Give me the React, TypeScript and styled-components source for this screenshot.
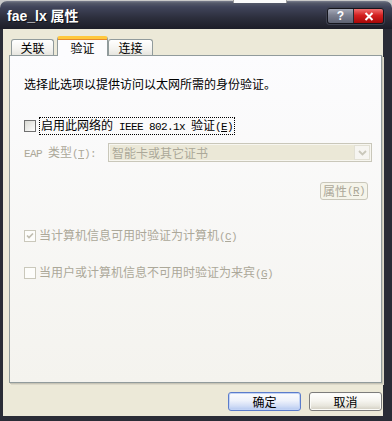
import styled, { createGlobalStyle } from "styled-components";

const GlobalStyle = createGlobalStyle`
  html, body { margin: 0; padding: 0; }
  body {
    width: 392px;
    height: 421px;
    overflow: hidden;
    background: #c9c9c9;
    font-family: "Noto Sans CJK SC", "Liberation Sans", sans-serif;
    font-size: 12px;
  }
  * { box-sizing: border-box; }
`;

const DISABLED = "#aca899";

const Window = styled.div`
  position: relative;
  width: 392px;
  height: 421px;
  display: flex;
  flex-direction: column;
`;

// 뒤쪽 창의 일부 (상단에 살짝 보이는 흰 영역)
const Peek = styled.div`
  position: absolute;
  top: 0;
  left: 233px;
  width: 54px;
  height: 3px;
  background: #fbfbfb;
  border-left: 1px solid #9a9a9a;
  border-right: 1px solid #9a9a9a;
  z-index: 2;
`;

const TitleBar = styled.div`
  height: 28px;
  margin-top: 1px;
  border-radius: 7px 7px 0 0;
  background: linear-gradient(
    #7a7e8e 0px,
    #555a6a 2px,
    #40445a 6px,
    #2c2e3c 17px,
    #1d1e28 28px
  );
  display: flex;
  align-items: center;
  justify-content: space-between;
  padding: 0 8px 0 7px;
`;

const Title = styled.div`
  color: #fff;
  font-family: "Liberation Sans", "Noto Sans CJK SC", sans-serif;
  font-weight: bold;
  font-size: 14px;
  line-height: 16px;
  padding-top: 2px;
  text-shadow: 1px 1px 0 #111218;
`;

const TitleButtons = styled.div`
  display: flex;
  margin-top: 2px;
  border: 1px solid #15161d;
  border-radius: 3px;
  overflow: hidden;
  box-shadow: 0 0 0 1px #3e4150;
`;

const CapButton = styled.div<{ $kind: "help" | "close" }>`
  width: ${(p) => (p.$kind === "help" ? 25 : 30)}px;
  height: 14px;
  display: flex;
  align-items: center;
  justify-content: center;
  color: #fff;
  font-family: "Liberation Sans", sans-serif;
  font-weight: bold;
  font-size: 12px;
  background: ${(p) =>
    p.$kind === "help"
      ? "linear-gradient(#a4a8b6, #7c8090 45%, #5e6272)"
      : "linear-gradient(#f07070, #d42020 45%, #a80808)"};
  border-left: ${(p) => (p.$kind === "close" ? "1px solid #2a2b34" : "none")};
`;

const Frame = styled.div`
  flex: 1;
  display: flex;
  flex-direction: column;
  background: #ece9d8;
  border-left: 3px solid #2a2c36;
  border-right: 9px solid #2a2c36;
  border-bottom: 5px solid #2a2c36;
  padding: 7px 1px 0 6px;
`;

const TabRow = styled.div`
  display: flex;
  align-items: flex-end;
  height: 19px;
  padding-left: 2px;
  position: relative;
  z-index: 1;
`;

const Tab = styled.div<{ $active?: boolean; $w: number; $gap?: number }>`
  width: ${(p) => p.$w}px;
  height: ${(p) => (p.$active ? 20 : 16)}px;
  margin-bottom: ${(p) => (p.$active ? -1 : 0)}px;
  margin-right: ${(p) => p.$gap ?? 0}px;
  display: flex;
  align-items: center;
  justify-content: center;
  padding-top: 1px;
  line-height: 14px;
  color: #000;
  border: 1px solid #919b9c;
  border-bottom: none;
  border-top: ${(p) => (p.$active ? "3px solid #ffc83c" : "1px solid #919b9c")};
  border-radius: 3px 3px 0 0;
  background: ${(p) =>
    p.$active ? "#fcfcfe" : "linear-gradient(#ffffff, #f4f3ef 60%, #e6e5df)"};
  box-shadow: ${(p) => (p.$active ? "inset 0 1px 0 #e68b2c" : "none")};
  position: relative;
  z-index: ${(p) => (p.$active ? 2 : 1)};
`;

const Panel = styled.div`
  width: 373px;
  height: 328px;
  border: 1px solid #919b9c;
  background: linear-gradient(#fcfcfe, #f4f3ee);
  box-shadow: 1px 1px 0 #c7c4b6, 2px 2px 0 #dcd9ca;
  display: flex;
  flex-direction: column;
  padding: 0 9px 0 14px;
`;

const Row = styled.div<{ $mt: number; $h?: number; $end?: boolean }>`
  margin-top: ${(p) => p.$mt}px;
  height: ${(p) => p.$h ?? 16}px;
  display: flex;
  align-items: center;
  justify-content: ${(p) => (p.$end ? "flex-end" : "flex-start")};
`;

const Text = styled.span<{ $disabled?: boolean }>`
  color: ${(p) => (p.$disabled ? DISABLED : "#000")};
  line-height: 16px;
  white-space: nowrap;
`;

// 반각 라틴 문자 (6px 폭)
const Half = styled.span`
  font-family: "Liberation Mono", monospace;
  font-size: 11px;
  letter-spacing: -0.6px;
`;

const Box = styled.span<{ $disabled?: boolean }>`
  width: 12px;
  height: 12px;
  flex: none;
  margin-right: 3px;
  display: flex;
  align-items: center;
  justify-content: center;
  border: 1px solid ${(p) => (p.$disabled ? "#cac8bb" : "#707070")};
  background: ${(p) =>
    p.$disabled ? "#fdfdfb" : "linear-gradient(135deg, #d9d9d3, #ffffff)"};
`;

const Label = styled.span<{ $focused?: boolean; $disabled?: boolean }>`
  color: ${(p) => (p.$disabled ? DISABLED : "#000")};
  line-height: 14px;
  white-space: nowrap;
  border: ${(p) => (p.$focused ? "1px dotted #000" : "none")};
  padding: ${(p) => (p.$focused ? "0 1px" : "0")};
`;

const FieldLabel = styled.span`
  width: 84px;
  flex: none;
  color: ${DISABLED};
  line-height: 16px;
  white-space: nowrap;
`;

const Combo = styled.div`
  width: 264px;
  height: 19px;
  border: 1px solid #c9c7ba;
  background: #ebe8d7;
  box-shadow: inset 0 0 0 1px #f7f6f0;
  display: flex;
  align-items: center;
  padding: 0 1px 0 3px;
  color: ${DISABLED};
`;

const ComboText = styled.span`
  flex: 1;
  line-height: 15px;
  white-space: nowrap;
`;

const DropButton = styled.div`
  width: 16px;
  height: 15px;
  border: 1px solid #e2e0d4;
  background: #f6f5f1;
  display: flex;
  align-items: center;
  justify-content: center;
`;

const SmallButton = styled.div`
  width: 48px;
  height: 18px;
  margin-right: 4px;
  border: 1px solid #c9c7ba;
  border-radius: 3px;
  background: #f5f4ea;
  color: ${DISABLED};
  display: flex;
  align-items: center;
  justify-content: center;
  line-height: 14px;
  white-space: nowrap;
`;

const ButtonRow = styled.div`
  margin-top: 9px;
  display: flex;
  justify-content: flex-end;
  gap: 8px;
`;

const DialogButton = styled.div<{ $default?: boolean }>`
  width: 73px;
  height: 19px;
  border-radius: 3px;
  display: flex;
  align-items: center;
  justify-content: center;
  color: #000;
  line-height: 14px;
  border: 1px solid ${(p) => (p.$default ? "#5b7ccb" : "#7c7c7c")};
  background: ${(p) =>
    p.$default
      ? "linear-gradient(#fbfcfe, #eef2fb 45%, #d3def6 75%, #b4c8f0)"
      : "linear-gradient(#ffffff, #f6f5f0 45%, #e8e6dd 75%, #d0ccbf)"};
  box-shadow: ${(p) =>
    p.$default ? "inset 0 0 0 1px #c2d3f5" : "inset 0 0 0 1px #fbfbf8"};
`;

const Check = () => (
  <svg width="8" height="8" viewBox="0 0 8 8">
    <path d="M1 3.5 L3 5.5 L7 1.5" fill="none" stroke="#c0bdb0" strokeWidth="1.7" />
  </svg>
);

const Chevron = () => (
  <svg width="9" height="6" viewBox="0 0 9 6">
    <path d="M1 1 L4.5 4.5 L8 1" fill="none" stroke="#c9c7ba" strokeWidth="1.8" />
  </svg>
);

const CloseX = () => (
  <svg width="10" height="9" viewBox="0 0 10 9">
    <path d="M1.5 1 L8.5 8 M8.5 1 L1.5 8" stroke="#fff" strokeWidth="2" />
  </svg>
);

const App: React.FC = () => {
  return (
    <>
      <GlobalStyle />
      <Window>
        <Peek />
        <TitleBar>
          <Title>fae_lx 属性</Title>
          <TitleButtons>
            <CapButton $kind="help">?</CapButton>
            <CapButton $kind="close">
              <CloseX />
            </CapButton>
          </TitleButtons>
        </TitleBar>
        <Frame>
          <TabRow>
            <Tab $w={43} $gap={3}>关联</Tab>
            <Tab $w={51} $active>验证</Tab>
            <Tab $w={45}>连接</Tab>
          </TabRow>
          <Panel>
            <Row $mt={20}>
              <Text>选择此选项以提供访问以太网所需的身份验证。</Text>
            </Row>
            <Row $mt={26}>
              <Box />
              <Label $focused>
                启用此网络的<Half> IEEE 802.1x </Half>验证<Half>(<u>E</u>)</Half>
              </Label>
            </Row>
            <Row $mt={9} $h={19}>
              <FieldLabel>
                <Half>EAP </Half>类型<Half>(<u>T</u>):</Half>
              </FieldLabel>
              <Combo>
                <ComboText>智能卡或其它证书</ComboText>
                <DropButton>
                  <Chevron />
                </DropButton>
              </Combo>
            </Row>
            <Row $mt={20} $h={18} $end>
              <SmallButton>
                属性<Half>(<u>R</u>)</Half>
              </SmallButton>
            </Row>
            <Row $mt={28}>
              <Box $disabled>
                <Check />
              </Box>
              <Label $disabled>
                当计算机信息可用时验证为计算机<Half>(<u>C</u>)</Half>
              </Label>
            </Row>
            <Row $mt={21}>
              <Box $disabled />
              <Label $disabled>
                当用户或计算机信息不可用时验证为来宾<Half>(<u>G</u>)</Half>
              </Label>
            </Row>
          </Panel>
          <ButtonRow>
            <DialogButton $default>确定</DialogButton>
            <DialogButton>取消</DialogButton>
          </ButtonRow>
        </Frame>
      </Window>
    </>
  );
};

export default App;
